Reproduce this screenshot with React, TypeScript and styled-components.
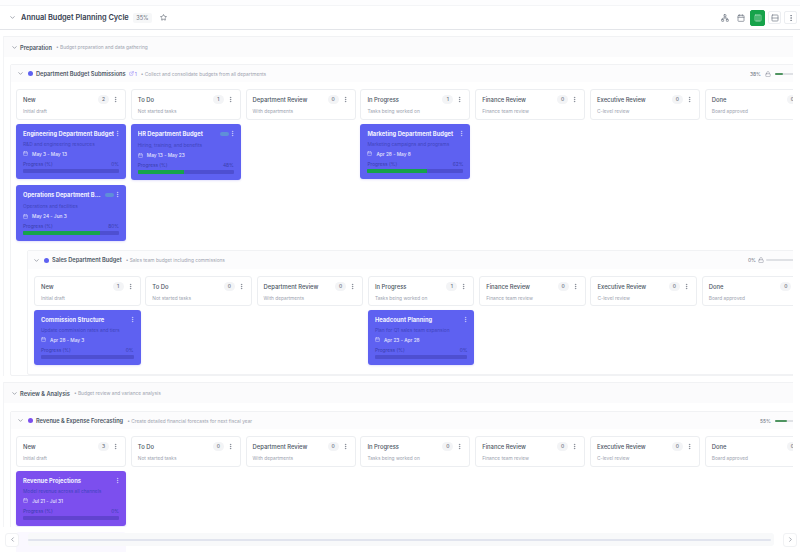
import React from 'react';
import styled, { createGlobalStyle } from 'styled-components';
import {
  Calendar,
  ChevronDown,
  ChevronLeft,
  ChevronRight,
  Columns3,
  EllipsisVertical,
  ExternalLink,
  Lock,
  Network,
  Rows2,
  Star,
} from 'lucide-react';

const COLUMNS = [
  { name: 'New', hint: 'Initial draft' },
  { name: 'To Do', hint: 'Not started tasks' },
  { name: 'Department Review', hint: 'With departments' },
  { name: 'In Progress', hint: 'Tasks being worked on' },
  { name: 'Finance Review', hint: 'Finance team review' },
  { name: 'Executive Review', hint: 'C-level review' },
  { name: 'Done', hint: 'Board approved' },
];

interface ITask {
  title: string;
  text: string;
  dates: string;
  progress: number;
  tall?: boolean;
  flagged?: boolean;
}

const GlobalStyle = createGlobalStyle`
  html, body {
    margin: 0;
    padding: 0;
    background: #fff;
    font-family: Inter, "Noto Sans", sans-serif;
  }
`;

const Page = styled.div`
  position: relative;
  width: 800px;
  height: 552px;
  overflow: hidden;
  background: #fff;
  display: flex;
  flex-direction: column;
`;

const TopStrip = styled.div`
  height: 5px;
  background: #fdfdfe;
  border-bottom: 1px solid #f4f5f7;
`;

const Header = styled.header`
  height: 23px;
  flex: none;
  display: flex;
  align-items: center;
  padding: 0 3px 0 9px;
  border-bottom: 1px solid #e3e5e9;
`;

const Title = styled.h1`
  margin: 0 0 0 5px;
  font-size: 7.4px;
  font-weight: 600;
  color: #374151;
`;

const Percent = styled.span`
  margin-left: 4px;
  padding: 2px 3.5px;
  border-radius: 2px;
  background: #f6f7f8;
  color: #6b7280;
  font-size: 5.6px;
`;

const Actions = styled.div`
  margin-left: auto;
  display: flex;
  align-items: center;
  gap: 3px;
`;

const ActionButton = styled.button<{ $active?: boolean; $framed?: boolean }>`
  padding: 0;
  width: ${(p) => (p.$active ? 15 : 13)}px;
  height: ${(p) => (p.$active ? 16 : 13)}px;
  display: flex;
  align-items: center;
  justify-content: center;
  border-radius: 2px;
  border: 1px solid ${(p) => (p.$active ? '#16a34a' : p.$framed ? '#eceef1' : 'transparent')};
  background: ${(p) => (p.$active ? '#16a34a' : 'transparent')};
  color: ${(p) => (p.$active ? '#b7e4c7' : '#6b7280')};
`;

const Main = styled.main`
  width: 793px;
  flex: 1;
  overflow: hidden;
  padding: 6px 0 0 3px;
  box-sizing: border-box;
`;

const PhaseHead = styled.div`
  width: 830px;
  height: 21px;
  display: flex;
  align-items: center;
  padding-left: 7px;
  box-sizing: border-box;
  background: #fbfbfc;
  border-top: 1px solid #f1f2f4;
`;

const PhaseName = styled.span`
  margin-left: 2px;
  font-size: 5.7px;
  font-weight: 600;
  color: #4b5563;
`;

const Note = styled.span`
  margin-left: 4px;
  font-size: 4.8px;
  color: #9ca3af;
  white-space: nowrap;
`;

const Phase = styled.section<{ $gap?: boolean }>`
  margin-top: ${(p) => (p.$gap ? 6 : 0)}px;
  border-left: 1px solid #f3f4f6;
`;

const Group = styled.div<{ $nested?: boolean; $top?: number }>`
  width: ${(p) => (p.$nested ? 790 : 810)}px;
  margin: ${(p) => (p.$nested ? '9px 0 0 11px' : `${p.$top ?? 7}px 0 0 6px`)};
  border: 1px solid #f1f2f4;
  border-radius: 2px;
`;

const GroupHead = styled.div<{ $nested?: boolean }>`
  width: ${(p) => (p.$nested ? 768 : 786)}px;
  height: ${(p) => (p.$nested ? 18 : 17)}px;
  display: flex;
  align-items: center;
  padding-left: ${(p) => (p.$nested ? 5 : 6)}px;
  box-sizing: border-box;
  background: #fcfcfd;
`;

const Dot = styled.i<{ $color: string }>`
  width: 5px;
  height: 5px;
  margin-left: 4px;
  border-radius: 50%;
  background: ${(p) => p.$color};
`;

const GroupName = styled.span`
  margin-left: 3px;
  font-size: 5.65px;
  font-weight: 600;
  color: #4b5563;
`;

const LinkCount = styled.span`
  margin-left: 3px;
  display: flex;
  align-items: center;
  gap: 1px;
  font-size: 5px;
  color: #8b7cf6;
`;

const Rollup = styled.div<{ $tight?: boolean }>`
  margin-left: auto;
  display: flex;
  align-items: center;
  justify-content: flex-end;
  gap: ${(p) => (p.$tight ? 2 : 4)}px;
  font-size: 5px;
  color: #6b7280;
  flex: none;
`;

const RollupTrack = styled.div<{ $wide?: boolean }>`
  width: ${(p) => (p.$wide ? 30 : 22)}px;
  height: 2px;
  flex: none;
  background: #dfe1e5;
  border-radius: 1px;
`;

const RollupFill = styled.div`
  height: 100%;
  background: #4f9460;
  border-radius: 1px;
`;

const GroupBody = styled.div<{ $nested?: boolean }>`
  padding: 7px 0 ${(p) => (p.$nested ? 9 : 0)}px ${(p) => (p.$nested ? 6 : 5)}px;
`;

const Board = styled.div<{ $gap: number }>`
  display: flex;
  align-items: flex-start;
  gap: ${(p) => p.$gap}px;
`;

const Column = styled.div<{ $width: number }>`
  flex: 0 0 ${(p) => p.$width}px;
  width: ${(p) => p.$width}px;
  display: flex;
  flex-direction: column;
  gap: 6px;
`;

const ColumnHead = styled.div<{ $compact?: boolean }>`
  height: ${(p) => (p.$compact ? 30 : 31)}px;
  margin-bottom: -2px;
  box-sizing: border-box;
  padding: 5px 6px;
  background: #fff;
  border: 1px solid #eceef1;
  border-radius: 3px;
`;

const ColumnRow = styled.div`
  display: flex;
  align-items: center;
  height: 9px;
`;

const ColumnName = styled.span`
  flex: 1;
  font-size: 5.85px;
  font-weight: 500;
  color: #4b5563;
  white-space: nowrap;
`;

const Count = styled.span`
  width: 11px;
  height: 9px;
  border-radius: 5px;
  background: #f3f4f6;
  color: #6b7280;
  font-size: 5px;
  font-weight: 500;
  line-height: 9px;
  text-align: center;
`;

const ColumnHint = styled.div`
  margin-top: 3.5px;
  font-size: 4.8px;
  color: #9ca3af;
  white-space: nowrap;
`;

const Card = styled.article<{ $color: string; $tall?: boolean }>`
  height: ${(p) => (p.$tall ? 56 : 55)}px;
  box-sizing: border-box;
  padding: ${(p) => (p.$tall ? 4 : 3.5)}px 4px 0 6px;
  border-radius: 3px;
  border: 1px solid ${(p) => p.$color}cc;
  background: ${(p) => p.$color};
  box-shadow: 0 1px 2px rgba(79, 70, 229, 0.15);
`;

const CardTop = styled.div`
  display: flex;
  align-items: center;
  height: 9px;
`;

const CardTitle = styled.div`
  flex: 1;
  min-width: 0;
  font-size: 5.8px;
  font-weight: 700;
  color: #f1f2ff;
  white-space: nowrap;
  overflow: hidden;
  text-overflow: ellipsis;
`;

const Flag = styled.i`
  flex: none;
  width: 9px;
  height: 4px;
  margin-left: 2px;
  border-radius: 2px;
  background: #5f8fd8;
`;

const CardText = styled.div<{ $tall?: boolean }>`
  margin-top: ${(p) => (p.$tall ? 3 : 2)}px;
  padding-right: 2px;
  font-size: 4.8px;
  line-height: 8px;
  color: #4145bd;
  white-space: nowrap;
`;

const CardDates = styled.div`
  margin-top: 2px;
  display: flex;
  align-items: center;
  gap: 4px;
  height: 8px;
  font-size: 4.8px;
  font-weight: 500;
  color: #e4e5fd;
`;

const ProgressRow = styled.div`
  margin-top: 2px;
  padding-right: 2px;
  display: flex;
  justify-content: space-between;
  font-size: 4.8px;
  line-height: 8px;
  color: #3a3eae;
`;

const Track = styled.div`
  margin: 1px 2px 0 0;
  height: 4px;
  border-radius: 1px;
  background: rgba(49, 46, 150, 0.35);
  overflow: hidden;
`;

const Fill = styled.div`
  height: 100%;
  background: #16a34a;
`;

const Ghost = styled.div`
  height: 60px;
  border-radius: 3px;
  background: #7c4fee;
`;

const Scroller = styled.div`
  position: absolute;
  left: 0;
  right: 0;
  bottom: 0;
  height: 25px;
  display: flex;
  align-items: center;
  gap: 9px;
  padding: 0 3px 0 5px;
  box-sizing: border-box;
  background: rgba(255, 255, 255, 0.96);
`;

const ScrollButton = styled.button`
  flex: none;
  width: 14px;
  height: 14px;
  padding: 0;
  display: flex;
  align-items: center;
  justify-content: center;
  background: #fff;
  border: 1px solid #f1f2f4;
  border-radius: 3px;
  color: #6b7280;
`;

const ScrollTrack = styled.div`
  flex: 1;
  height: 13px;
  display: flex;
  align-items: center;
  padding-right: 3px;
  border-radius: 3px;
  background: #f8f9fa;
`;

const ScrollThumb = styled.div`
  width: 100%;
  height: 2px;
  border-radius: 1px;
  background: #e1e4ee;
`;

const Task: React.FC<{ task: ITask; color: string }> = ({ task, color }) => (
  <Card $color={color} $tall={task.tall}>
    <CardTop>
      <CardTitle>{task.title}</CardTitle>
      {task.flagged && <Flag />}
      <EllipsisVertical size={7} color="#d9dbfb" strokeWidth={2} style={{ flex: 'none' }} />
    </CardTop>
    <CardText $tall={task.tall}>{task.text}</CardText>
    <CardDates>
      <Calendar size={5} strokeWidth={2} />
      {task.dates}
    </CardDates>
    <ProgressRow>
      <span>Progress (%)</span>
      <span>{task.progress}%</span>
    </ProgressRow>
    <Track>
      <Fill style={{ width: `${task.progress}%` }} />
    </Track>
  </Card>
);

interface ILaneProps {
  width: number;
  gap: number;
  color: string;
  counts: number[];
  tasks: Record<number, ITask[]>;
  ghost?: boolean;
  compact?: boolean;
}

const Lanes: React.FC<ILaneProps> = ({ width, gap, color, counts, tasks, ghost, compact }) => (
  <Board $gap={gap}>
    {COLUMNS.map((col, i) => (
      <Column key={col.name} $width={width}>
        <ColumnHead $compact={compact}>
          <ColumnRow>
            <ColumnName>{col.name}</ColumnName>
            <Count>{counts[i]}</Count>
            <EllipsisVertical size={7} color="#6b7280" style={{ marginLeft: 3, flex: 'none' }} />
          </ColumnRow>
          <ColumnHint>{col.hint}</ColumnHint>
        </ColumnHead>
        {(tasks[i] ?? []).map((t) => (
          <Task key={t.title} task={t} color={color} />
        ))}
        {ghost && i === 0 && <Ghost />}
      </Column>
    ))}
  </Board>
);

const Progress: React.FC<{ value: number; locked?: boolean; wide?: boolean }> = ({
  value,
  locked,
  wide,
}) => (
  <Rollup $tight={wide}>
    <span>{value}%</span>
    {locked && <Lock size={6} strokeWidth={1.5} style={{ flex: 'none' }} />}
    <RollupTrack $wide={wide}>
      <RollupFill style={{ width: `${value}%` }} />
    </RollupTrack>
  </Rollup>
);

const Chevron = () => <ChevronDown size={7} color="#6b7280" style={{ flex: 'none' }} />;

export default function App() {
  return (
    <Page>
      <GlobalStyle />
      <TopStrip />
      <Header>
        <ChevronDown size={7} color="#6b7280" />
        <Title>Annual Budget Planning Cycle</Title>
        <Percent>35%</Percent>
        <Star size={7} color="#4b5563" style={{ marginLeft: 8 }} />
        <Actions>
          <ActionButton>
            <Network size={8} />
          </ActionButton>
          <ActionButton>
            <Calendar size={8} />
          </ActionButton>
          <ActionButton $active>
            <Columns3 size={8} />
          </ActionButton>
          <ActionButton $framed>
            <Rows2 size={8} />
          </ActionButton>
          <ActionButton $framed>
            <EllipsisVertical size={8} />
          </ActionButton>
        </Actions>
      </Header>
      <Main>
        <Phase>
          <PhaseHead>
            <Chevron />
            <PhaseName>Preparation</PhaseName>
            <Note>• Budget preparation and data gathering</Note>
          </PhaseHead>
          <Group>
            <GroupHead>
              <Chevron />
              <Dot $color="#5e61f1" />
              <GroupName>Department Budget Submissions</GroupName>
              <LinkCount>
                <ExternalLink size={5} />1
              </LinkCount>
              <Note>• Collect and consolidate budgets from all departments</Note>
              <Progress value={38} locked />
            </GroupHead>
            <GroupBody>
              <Lanes
                width={110}
                gap={4.8}
                color="#5e61f1"
                counts={[2, 1, 0, 1, 0, 0, 0]}
                tasks={{
                  0: [
                    {
                      title: 'Engineering Department Budget',
                      text: 'R&D and engineering resources',
                      dates: 'May 3 - May 13',
                      progress: 0,
                    },
                    {
                      title: 'Operations Department Budget',
                      text: 'Operations and facilities',
                      dates: 'May 24 - Jun 3',
                      progress: 80,
                      tall: true,
                      flagged: true,
                    },
                  ],
                  1: [
                    {
                      title: 'HR Department Budget',
                      text: 'Hiring, training, and benefits',
                      dates: 'May 13 - May 23',
                      progress: 48,
                      tall: true,
                      flagged: true,
                    },
                  ],
                  3: [
                    {
                      title: 'Marketing Department Budget',
                      text: 'Marketing campaigns and programs',
                      dates: 'Apr 28 - May 8',
                      progress: 62,
                    },
                  ],
                }}
              />
              <Group $nested>
                <GroupHead $nested>
                  <Chevron />
                  <Dot $color="#5e61f1" />
                  <GroupName>Sales Department Budget</GroupName>
                  <Note>• Sales team budget including commissions</Note>
                  <Progress value={0} locked wide />
                </GroupHead>
                <GroupBody $nested>
                  <Lanes
                    width={106.5}
                    gap={4.8}
                    color="#5e61f1"
                    compact
                    counts={[1, 0, 0, 1, 0, 0, 0]}
                    tasks={{
                      0: [
                        {
                          title: 'Commission Structure',
                          text: 'Update commission rates and tiers',
                          dates: 'Apr 28 - May 3',
                          progress: 0,
                        },
                      ],
                      3: [
                        {
                          title: 'Headcount Planning',
                          text: 'Plan for Q1 sales team expansion',
                          dates: 'Apr 23 - Apr 28',
                          progress: 0,
                        },
                      ],
                    }}
                  />
                </GroupBody>
              </Group>
            </GroupBody>
          </Group>
        </Phase>
        <Phase $gap>
          <PhaseHead>
            <Chevron />
            <PhaseName>Review &amp; Analysis</PhaseName>
            <Note>• Budget review and variance analysis</Note>
          </PhaseHead>
          <Group $top={8}>
            <GroupHead>
              <Chevron />
              <Dot $color="#7c4fee" />
              <GroupName>Revenue &amp; Expense Forecasting</GroupName>
              <Note>• Create detailed financial forecasts for next fiscal year</Note>
              <Progress value={55} />
            </GroupHead>
            <GroupBody>
              <Lanes
                width={110}
                gap={4.8}
                color="#7c4fee"
                counts={[3, 0, 0, 0, 0, 0, 0]}
                ghost
                tasks={{
                  0: [
                    {
                      title: 'Revenue Projections',
                      text: 'Model revenue across all channels',
                      dates: 'Jul 21 - Jul 31',
                      progress: 0,
                    },
                  ],
                }}
              />
            </GroupBody>
          </Group>
        </Phase>
      </Main>
      <Scroller>
        <ScrollButton>
          <ChevronLeft size={7} />
        </ScrollButton>
        <ScrollTrack>
          <ScrollThumb />
        </ScrollTrack>
        <ScrollButton>
          <ChevronRight size={7} />
        </ScrollButton>
      </Scroller>
    </Page>
  );
}
